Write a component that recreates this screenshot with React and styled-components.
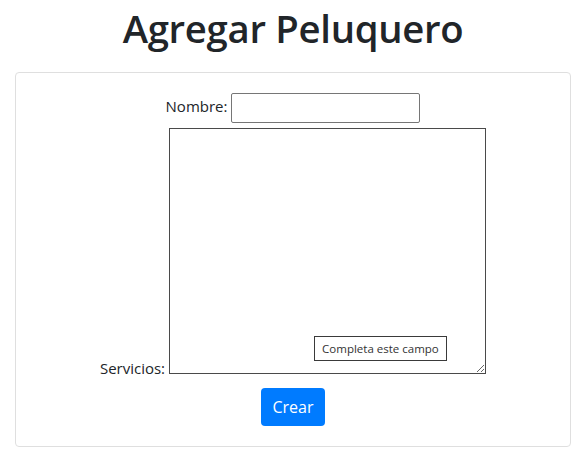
import React, { useState } from "react";
import styled, { createGlobalStyle } from "styled-components";

const GlobalStyle = createGlobalStyle`
  body {
    margin: 0;
    background: #fff;
    color: #212529;
    font-family: "Open Sans", "Noto Sans", sans-serif;
    font-size: 16px;
  }
  * { box-sizing: border-box; }
`;

const Page = styled.div`
  padding: 0 15px;
`;

const Title = styled.h1`
  margin: 0 0 16px;
  padding-top: 0;
  text-align: center;
  font-size: 38.3px;
  font-weight: 600;
  line-height: 56px;
  letter-spacing: -0.3px;
  color: #212529;
`;

const Card = styled.div`
  border: 1px solid #dfdfdf;
  border-radius: 4px;
  padding: 20px 20px 20px;
`;

const Form = styled.form`
  text-align: center;
  line-height: 1.5;
`;

const Line = styled.div`
  margin-bottom: ${p => p.gap || 0}px;
`;

const Label = styled.label`
  font-size: 15px;
`;

const TextInput = styled.input`
  width: 189px;
  height: 30px;
  margin-left: 4px;
  border: 1px solid #767676;
  border-radius: 2px;
  vertical-align: middle;
  font: inherit;
`;

const Area = styled.textarea`
  width: 317px;
  height: 246px;
  margin: 5px 0 0 4px;
  border: 1px solid #4a4a4a;
  border-radius: 0;
  vertical-align: baseline;
  font: inherit;
`;

const AreaWrap = styled.span`
  position: relative;
  display: inline-block;
`;

const Bubble = styled.span`
  position: absolute;
  left: 149px;
  bottom: 19px;
  padding: 3px 7px;
  border: 1px solid #3a3a3a;
  background: #fff;
  font-size: 11.5px;
  line-height: 17px;
  white-space: nowrap;
  color: #333;
`;

const Button = styled.button`
  width: 64px;
  height: 38px;
  border: none;
  border-radius: 4px;
  background: #007bff;
  color: #fff;
  font-family: inherit;
  font-size: 16px;
  cursor: pointer;
`;

export default function App() {
  const [nombre, setNombre] = useState("");
  const [servicios, setServicios] = useState("");

  return (
    <Page>
      <GlobalStyle />
      <Title>Agregar Peluquero</Title>
      <Card>
        <Form onSubmit={e => e.preventDefault()}>
          <Line>
            <Label>
              Nombre:
              <TextInput value={nombre} onChange={e => setNombre(e.target.value)} />
            </Label>
          </Line>
          <Line gap={8}>
            <Label>
              Servicios:
              <AreaWrap>
                <Area value={servicios} onChange={e => setServicios(e.target.value)} />
                <Bubble>Completa este campo</Bubble>
              </AreaWrap>
            </Label>
          </Line>
          <Button type="submit">Crear</Button>
        </Form>
      </Card>
    </Page>
  );
}
